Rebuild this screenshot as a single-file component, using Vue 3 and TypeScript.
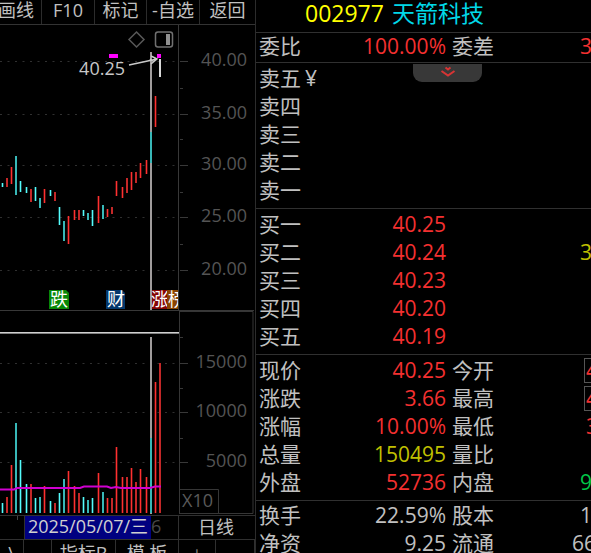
<script setup lang="ts">
type Tone = 'up' | 'down'
interface Bar {
  x: number
  wide: boolean
  tone: Tone
  high: number
  low: number
  vol: number
}
interface Quote {
  label: string
  value?: string
  tone?: string
  label2?: string
  value2?: string
  tone2?: string
  indent?: string
  boxed?: boolean
  mark?: string
}

const raw: [number, number, string, number, number, number][] = [
  [2, 0, 'down', 183, 187, 503], [6, 1, 'up', 178, 187, 497], [11, 0, 'up', 167, 184, 465],
  [15, 1, 'down', 156, 195, 423], [20, 0, 'down', 181, 192, 460], [26, 0, 'down', 187, 193, 484],
  [30, 1, 'up', 189, 202, 484], [35, 0, 'down', 187, 201, 498], [39, 1, 'down', 198, 208, 497],
  [44, 0, 'up', 189, 203, 486], [50, 0, 'down', 190, 196, 501], [54, 1, 'up', 192, 201, 503],
  [59, 0, 'down', 207, 225, 493], [63, 1, 'down', 221, 241, 479], [68, 0, 'up', 216, 244, 471],
  [74, 0, 'up', 210, 220, 486], [78, 1, 'up', 210, 220, 493], [83, 0, 'down', 210, 216, 497],
  [87, 1, 'down', 213, 220, 500], [92, 0, 'down', 210, 226, 498], [98, 0, 'up', 196, 223, 473],
  [102, 1, 'down', 205, 219, 492], [107, 0, 'up', 209, 217, 498], [111, 1, 'up', 207, 214, 498],
  [116, 0, 'up', 181, 196, 447], [122, 0, 'up', 187, 198, 477], [126, 1, 'up', 178, 193, 477],
  [131, 0, 'up', 172, 190, 468], [135, 1, 'up', 172, 183, 482], [140, 0, 'up', 163, 178, 469],
  [146, 0, 'up', 160, 174, 477], [150, 1, 'down', 132, 163, 438], [155, 0, 'up', 96, 127, 382],
  [159, 1, 'up', 59, 59, 363],
]
const bars: Bar[] = raw.map(([x, w, tone, high, low, vol]) => ({
  x, wide: w === 1, tone: tone as Tone, high: high - 25, low: low - 25, vol: vol - 311,
}))

const menu = ['画线', 'F10', '标记', '-自选', '返回']
const priceTicks = [
  { y: 36, text: '40.00' }, { y: 89, text: '35.00' }, { y: 140, text: '30.00' },
  { y: 192, text: '25.00' }, { y: 245, text: '20.00' },
]
const priceMinor = [63, 114, 167, 219]
const volumeTicks = [{ y: 52, text: '15000' }, { y: 101, text: '10000' }, { y: 151, text: '5000' }]
const volumeMinor = [26, 77, 127]

const sells: Quote[] = [
  { label: '卖五', mark: '¥' }, { label: '卖四' }, { label: '卖三' }, { label: '卖二' }, { label: '卖一' },
]
const buys: Quote[] = [
  { label: '买一', value: '40.25', tone: 'red' },
  { label: '买二', value: '40.24', tone: 'red', value2: '3', tone2: 'yellow', indent: 'near' },
  { label: '买三', value: '40.23', tone: 'red' },
  { label: '买四', value: '40.20', tone: 'red' },
  { label: '买五', value: '40.19', tone: 'red' },
]
const stats: Quote[] = [
  { label: '现价', value: '40.25', tone: 'red', label2: '今开', value2: '4', tone2: 'red', boxed: true },
  { label: '涨跌', value: '3.66', tone: 'red', label2: '最高', value2: '4', tone2: 'red', boxed: true },
  { label: '涨幅', value: '10.00%', tone: 'red', label2: '最低', value2: '3', tone2: 'red', indent: 'far' },
  { label: '总量', value: '150495', tone: 'yellow', label2: '量比' },
  { label: '外盘', value: '52736', tone: 'red', label2: '内盘', value2: '9', tone2: 'green', indent: 'near' },
]
const shares: Quote[] = [
  { label: '换手', value: '22.59%', label2: '股本', value2: '1', indent: 'near' },
  { label: '净资', value: '9.25', label2: '流通', value2: '66' },
]
const ratio: Quote[] = [
  { label: '委比', value: '100.00%', tone: 'red', label2: '委差', value2: '3', tone2: 'red', indent: 'near' },
]
const sections = [
  { name: 'ratio', rows: ratio }, { name: 'sells', rows: sells }, { name: 'buys', rows: buys },
  { name: 'stats', rows: stats }, { name: 'shares', rows: shares },
]
</script>

<template>
  <div class="terminal">
    <section class="chart">
      <nav class="menu">
        <button v-for="item in menu" :key="item" type="button">{{ item }}</button>
      </nav>

      <svg class="pane" viewBox="0 0 255 286">
        <g class="grid">
          <line v-for="t in priceTicks" :key="t.text" x1="0" x2="177" :y1="t.y + 0.5" :y2="t.y + 0.5" />
        </g>
        <g class="tick">
          <rect v-for="t in priceTicks" :key="t.text" x="180" :y="t.y" width="8" height="1" />
          <rect v-for="y in priceMinor" :key="y" x="180" :y="y" width="3" height="1" />
        </g>
        <g class="axis-text">
          <text v-for="t in priceTicks" :key="t.text" x="247" :y="t.y + 5">{{ t.text }}</text>
        </g>
        <rect class="frame" x="178" y="0" width="1" height="286" />
        <rect class="frame" x="0" y="285" width="254" height="1" />

        <rect class="cross" x="150" y="27" width="2" height="258" />
        <g v-for="b in bars" :key="b.x" :class="b.tone">
          <rect v-if="!b.wide" class="halo" :x="b.x - 1" :y="b.high" width="3" :height="b.low - b.high" />
          <rect :class="{ wide: b.wide }" :x="b.x" :y="b.high" :width="b.wide ? 2 : 1" :height="b.low - b.high" />
        </g>
        <rect class="limit" x="159" y="34" width="2" height="18" />
        <rect class="flag" x="109" y="29" width="9" height="4" />
        <path class="arrow" d="M129 40 L157 34 M151 31 L157 34 L151 39 M150 34 L154 37" />
        <rect class="flag" x="157" y="29" width="4" height="4" />
        <text class="peak" x="125" y="50">40.25</text>

        <path class="diamond" d="M136.500 7 L144 14.500 L136.500 22 L129 14.500 Z" />
        <rect class="toggle" x="155.500" y="7" width="17" height="15" rx="2.500" />
        <rect class="toggle-fill" x="166" y="9" width="4" height="11" />

        <g class="tag">
          <path fill="#078707" d="M49 265 H66 L69 268 V284 H49 Z" />
          <text x="50" y="281">跌</text>
          <path fill="#04386c" d="M106 265 H122 L125 268 V284 H106 Z" />
          <text x="107" y="281">财</text>
          <path fill="#850404" d="M152 265 H168 V284 H152 Z" />
          <text x="151" y="281">涨</text>
          <svg x="167" y="265" width="11" height="19">
            <rect fill="#8a4300" width="11" height="19" />
            <text x="1" y="16">榜</text>
          </svg>
        </g>
      </svg>

      <svg class="pane" viewBox="0 0 255 204">
        <g class="grid">
          <line v-for="t in volumeTicks" :key="t.text" x1="0" x2="177" :y1="t.y + 0.5" :y2="t.y + 0.5" />
        </g>
        <g class="tick">
          <rect v-for="t in volumeTicks" :key="t.text" x="180" :y="t.y" width="8" height="1" />
          <rect v-for="y in volumeMinor" :key="y" x="180" :y="y" width="3" height="1" />
        </g>
        <g class="axis-text">
          <text v-for="t in volumeTicks" :key="t.text" x="247" :y="t.y + 5">{{ t.text }}</text>
        </g>
        <path class="box" d="M179.500 0 V203 M179 0.500 H253 V202.500 H179 M180 178.500 H218.500 V202" />
        <text class="unit" x="182" y="196">X10</text>
        <rect class="level" x="0" y="21" width="179" height="1" />
        <rect class="level-dim" x="0" y="22" width="179" height="1" />
        <rect class="cross" x="150" y="26" width="2" height="177" />
        <g v-for="b in bars" :key="b.x" :class="b.tone">
          <rect v-if="!b.wide" class="halo" :x="b.x - 1" :y="b.vol" width="3" :height="202 - b.vol" />
          <rect :class="{ wide: b.wide }" :x="b.x" :y="b.vol" :width="b.wide ? 2 : 1" :height="202 - b.vol" />
        </g>
        <path class="average" d="M0 178.500 H14 L17 177 H80 L84 175.500 H107 L111 177 L116 176 L121 177 H150 L155 175.500 H161" />
      </svg>

      <div class="dates">
        <span class="mark"></span>
        <span class="track"><span class="date">2025/05/07/三</span><span class="next">6</span></span>
        <button type="button" class="period">日线</button>
      </div>
      <div class="tabs">
        <button type="button">\</button>
        <button type="button"></button>
        <button type="button">指标B</button>
        <button type="button">模 板</button>
        <button type="button" class="zoom">+</button>
        <button type="button" class="zoom">−</button>
      </div>
    </section>

    <section class="quote">
      <h1><span class="code">002977</span><span class="name">天箭科技</span></h1>
      <div v-for="s in sections" :key="s.name" class="group" :class="s.name">
        <button v-if="s.name === 'sells'" type="button" class="pull" aria-label="展开">
          <svg width="16" height="14" viewBox="0 0 16 14">
            <path d="M5.500 1.500 L8 3.500 L10.500 1.500 M1.500 5 L8 9.500 L14.500 5" />
          </svg>
        </button>
        <div v-for="r in s.rows" :key="r.label" class="row">
          <span>{{ r.label }}<i v-if="r.mark">{{ r.mark }}</i></span>
          <span class="value" :class="r.tone">{{ r.value }}</span>
          <span>{{ r.label2 }}</span>
          <span class="value2" :class="[r.tone2, r.indent, { boxed: r.boxed }]">{{ r.value2 }}</span>
        </div>
      </div>
    </section>
  </div>
</template>

<style>
body {
  background: #000;
}
</style>

<style scoped>
.terminal {
  display: flex;
  height: 100vh;
  overflow: hidden;
  background: #000;
  color: #c0c0c0;
  font-family: "Open Sans", "Noto Sans CJK SC", sans-serif;
  font-size: 18px;
}
button {
  margin: 0;
  padding: 0;
  border: 0;
  background: none;
  color: inherit;
  font: inherit;
  white-space: nowrap;
}
.chart {
  flex: none;
  width: 255px;
  border-right: 1px solid #2c2c2c;
}
.menu {
  display: grid;
  grid-template-columns: 42px 53px 52px 53px 55px;
  height: 24px;
  border-bottom: 1px solid #333;
}
.menu button {
  display: flex;
  justify-content: center;
  border-right: 1px solid #2c2c2c;
  line-height: 20px;
}
.menu button:first-child {
  justify-content: flex-end;
  padding-right: 7px;
}
.menu button:last-child {
  border-right: 0;
}
.pane {
  display: block;
  width: 100%;
}
.grid line {
  stroke: #303030;
  stroke-width: 1;
  stroke-dasharray: 2 5.5;
}
.tick rect,
.frame {
  fill: #383838;
}
.axis-text text {
  fill: #545454;
  text-anchor: end;
}
.cross {
  fill: #a09c9c;
}
.up rect {
  fill: #ff3030;
}
.up .wide {
  fill: #c42828;
}
.down rect {
  fill: #54fcfc;
}
.down .wide {
  fill: #38b8b8;
}
.up .halo,
.down .halo {
  opacity: 0.3;
}
.limit {
  fill: #d8d8d8;
}
.flag {
  fill: #f0f;
}
.arrow {
  fill: none;
  stroke: #c8c8c8;
  stroke-width: 1.5;
}
.peak {
  fill: #c8c8c8;
  text-anchor: end;
}
.diamond {
  fill: none;
  stroke: #585858;
  stroke-width: 1.5;
}
.toggle {
  fill: none;
  stroke: #707070;
  stroke-width: 1.5;
}
.toggle-fill {
  fill: #909090;
}
.tag text {
  fill: #fff;
}
.box {
  fill: none;
  stroke: #363636;
  stroke-width: 1;
}
.unit {
  fill: #5a5a5a;
}
.level {
  fill: #d0d0d0;
}
.level-dim {
  fill: #808080;
}
.average {
  fill: none;
  stroke: #d000d0;
  stroke-width: 2;
}
.dates {
  display: grid;
  grid-template-columns: 24px 1fr 77px;
  height: 23px;
  border-top: 1px solid #303030;
  border-bottom: 1px solid #303030;
  line-height: 21px;
}
.mark {
  width: 17px;
  height: 4px;
  border-right: 1px solid #444;
}
.track {
  display: flex;
  overflow: hidden;
  border-left: 1px solid #303030;
}
.date {
  flex: none;
  width: 126px;
  background: #000080;
  color: #d0d0d0;
  text-align: center;
}
.next {
  color: #484848;
}
.period {
  border-left: 1px solid #303030;
  padding-right: 2px;
}
.tabs {
  display: grid;
  grid-template-columns: 24px 28px 64px 63px 37px 39px;
  line-height: 26px;
}
.tabs button {
  height: 26px;
  border-right: 1px solid #303030;
}
.tabs .zoom {
  color: #808080;
}
.quote {
  flex: 1;
  min-width: 0;
  overflow: hidden;
  font-size: 21px;
}
h1 {
  display: flex;
  gap: 8px;
  margin: 0;
  padding: 0 0 6px 49px;
  font-size: 23px;
  font-weight: 400;
  line-height: 26px;
  white-space: nowrap;
}
.code {
  color: #ff0;
}
.name {
  color: #00d8e8;
}
.group {
  position: relative;
  padding: 1px 0 4px;
  border-top: 1px solid #303030;
}
.ratio {
  padding: 0 0 1px;
}
.shares {
  padding: 0;
}
.row {
  display: grid;
  grid-template-columns: 62px 125px 126px 1fr;
  height: 28px;
  padding-left: 3px;
  line-height: 28px;
  white-space: nowrap;
}
.ratio .row {
  line-height: 26px;
}
.row i {
  margin-left: 4px;
  font-style: normal;
}
.value {
  text-align: right;
}
.row span:nth-child(3) {
  padding-left: 6px;
}
.near {
  padding-left: 8px;
}
.far {
  padding-left: 14px;
}
.boxed {
  margin: 2px 0 1px 12px;
  border: 1px solid #555;
  border-right: 0;
  padding-left: 1px;
  line-height: 23px;
}
.red {
  color: #f43030;
}
.yellow {
  color: #c0c000;
}
.green {
  color: #00c848;
}
.pull {
  position: absolute;
  top: 1px;
  left: 157px;
  width: 69px;
  height: 18px;
  border-radius: 0 0 9px 9px;
  background: #383838;
  line-height: 0;
}
.pull path {
  fill: none;
  stroke: #d83434;
  stroke-width: 2;
}
</style>
